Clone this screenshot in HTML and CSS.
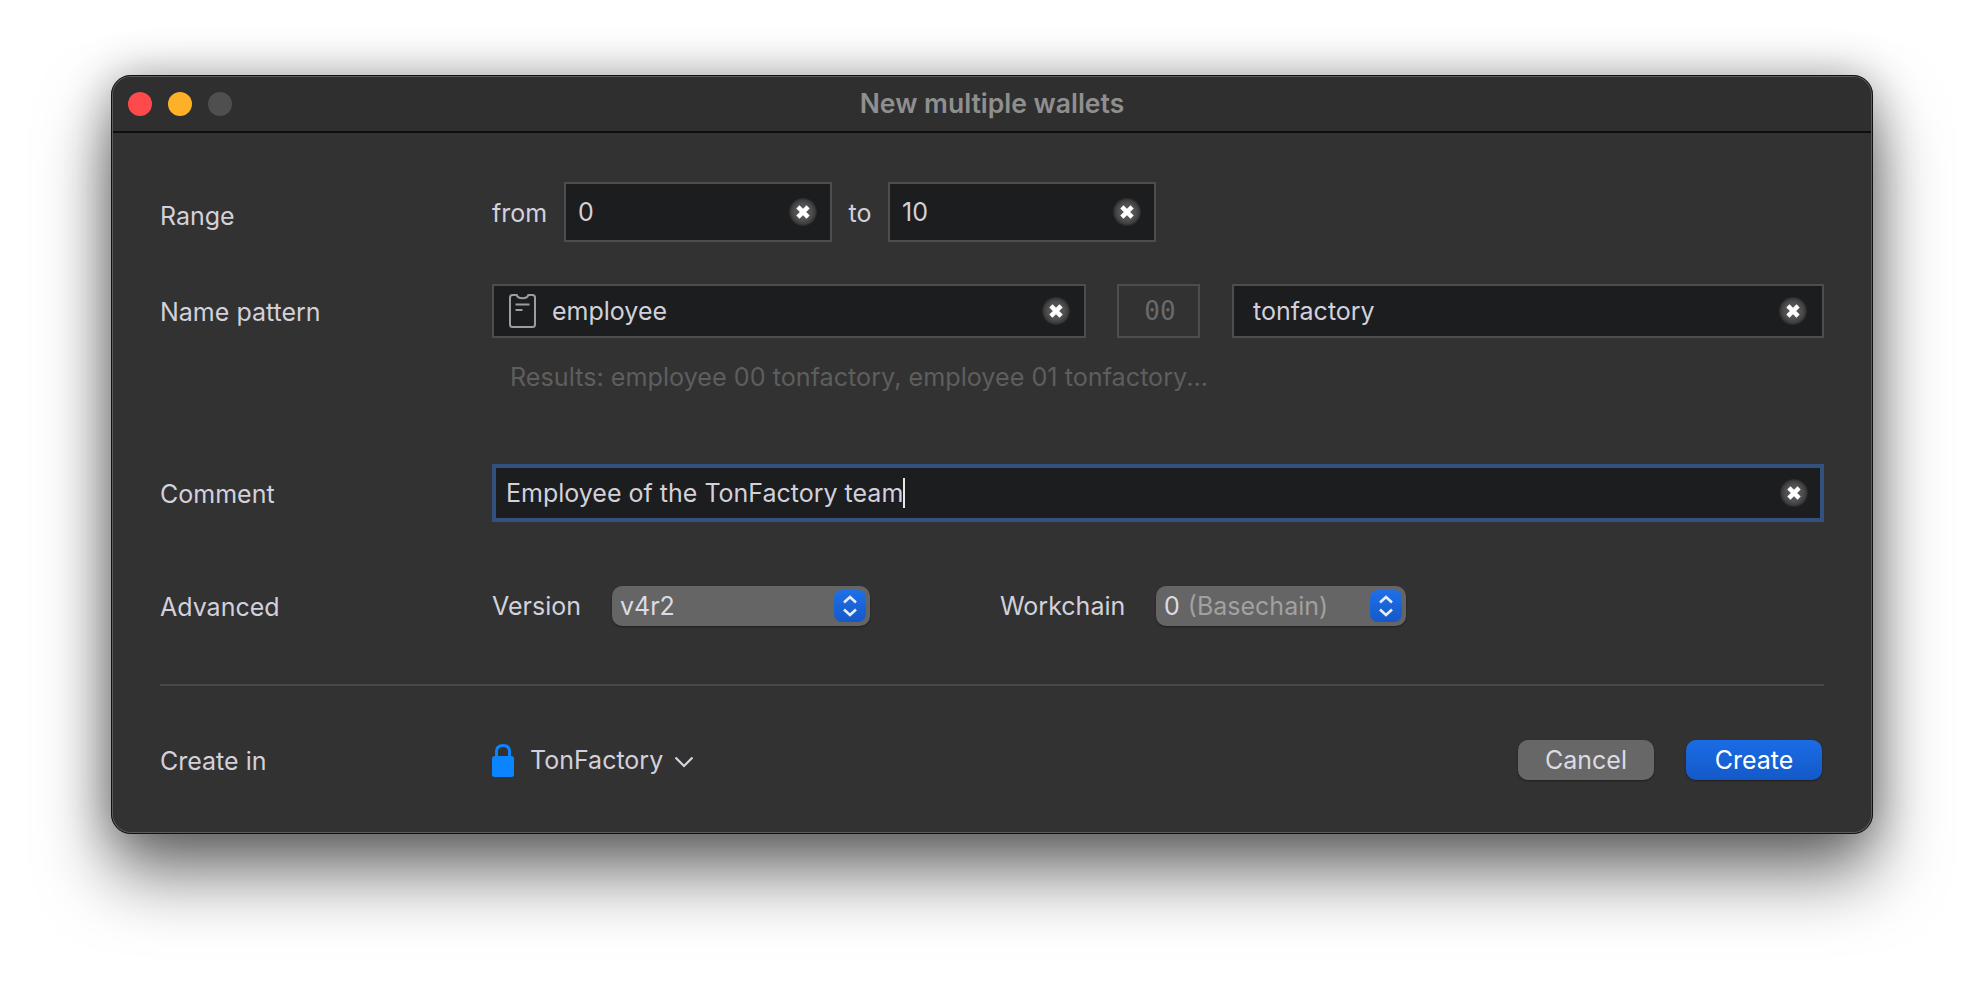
FILE: index.html
```html
<!DOCTYPE html>
<html lang="en">
<head>
  <meta charset="UTF-8">
  <title>New multiple wallets</title>
  <link rel="stylesheet" href="styles.css">
</head>
<body>
<div class="window">
  <div class="titlebar">
    <div class="lights">
      <span class="light red"></span>
      <span class="light yellow"></span>
      <span class="light gray"></span>
    </div>
    <div class="title">New multiple wallets</div>
  </div>

  <div class="form">
    <!-- range -->
    <div class="row row-range">
      <div class="label label-low">Range</div>
      <div class="fields">
        <span class="word word-from">from</span>
        <div class="input input-range">
          <span class="value">0</span>
          <span class="clear"><svg viewBox="0 0 12 12"><path d="M2.6 2.6l6.8 6.8M9.4 2.6l-6.8 6.8"/></svg></span>
        </div>
        <span class="word word-to">to</span>
        <div class="input input-range">
          <span class="value">10</span>
          <span class="clear"><svg viewBox="0 0 12 12"><path d="M2.6 2.6l6.8 6.8M9.4 2.6l-6.8 6.8"/></svg></span>
        </div>
      </div>
    </div>

    <!-- name pattern -->
    <div class="row row-name">
      <div class="label">Name pattern</div>
      <div class="fields fields-name">
        <div class="input input-prefix">
          <svg class="badge" viewBox="0 0 27 34">
            <path class="badge-line" d="M3.5 1h4.2c.5 2.2 2.6 3.2 5.8 3.2s5.300-1 5.800-3.200h4.200c1.400 0 2.500 1.100 2.500 2.500v27c0 1.400-1.100 2.500-2.500 2.500h-20c-1.400 0-2.500-1.100-2.500-2.500v-27c0-1.400 1.100-2.500 2.500-2.500z"/>
            <path class="badge-text" d="M6.500 10.500h14M6.500 16h7"/>
          </svg>
          <span class="value">employee</span>
          <span class="clear"><svg viewBox="0 0 12 12"><path d="M2.6 2.6l6.8 6.8M9.4 2.6l-6.8 6.8"/></svg></span>
        </div>
        <div class="counter">00</div>
        <div class="input input-suffix">
          <span class="value">tonfactory</span>
          <span class="clear"><svg viewBox="0 0 12 12"><path d="M2.6 2.6l6.8 6.8M9.4 2.6l-6.8 6.8"/></svg></span>
        </div>
      </div>
    </div>
    <div class="results">Results: employee 00 tonfactory, employee 01 tonfactory...</div>

    <!-- comment -->
    <div class="row row-comment">
      <div class="label">Comment</div>
      <div class="input input-focus">
        <span class="value">Employee of the TonFactory team</span>
        <span class="caret"></span>
        <span class="clear"><svg viewBox="0 0 12 12"><path d="M2.6 2.6l6.8 6.8M9.4 2.6l-6.8 6.8"/></svg></span>
      </div>
    </div>

    <!-- advanced -->
    <div class="row row-advanced">
      <div class="label">Advanced</div>
      <div class="fields">
        <span class="word word-version">Version</span>
        <div class="select select-version">
          <span class="select-text">v4r2</span>
          <span class="stepper"><svg viewBox="0 0 32 32"><path d="M10 12.500l6-5.500 6 5.500M10 19.500l6 5.500 6-5.500"/></svg></span>
        </div>
        <span class="word word-workchain">Workchain</span>
        <div class="select select-workchain">
          <span class="select-text">0</span>
          <span class="select-hint">(Basechain)</span>
          <span class="stepper"><svg viewBox="0 0 32 32"><path d="M10 12.500l6-5.500 6 5.500M10 19.500l6 5.500 6-5.500"/></svg></span>
        </div>
      </div>
    </div>

    <div class="divider"></div>

    <!-- footer -->
    <div class="row row-footer">
      <div class="label">Create in</div>
      <div class="fields fields-footer">
        <svg class="lock" viewBox="0 0 22 33">
          <path class="lock-shackle" d="M4.500 14v-6.500c0-4 2.600-6 6.500-6s6.500 2 6.500 6v6.500"/>
          <rect class="lock-body" x="0" y="12" width="22" height="21" rx="2.500"/>
        </svg>
        <span class="vault">TonFactory</span>
        <svg class="chevron" viewBox="0 0 20 12"><path d="M1.500 1.500l8.500 8.500 8.500-8.500"/></svg>
        <div class="buttons">
          <div class="btn btn-cancel">Cancel</div>
          <div class="btn btn-create">Create</div>
        </div>
      </div>
    </div>
  </div>
</div>
</body>
</html>
```

FILE: styles.css
```css
* {
  padding: 0;
  margin: 0;
  box-sizing: border-box;
}

body {
  width: 1984px;
  height: 982px;
  padding: 75px 111px 0;
  background: #fff;
  overflow: hidden;
  font-family: "Inter", "Liberation Sans", sans-serif;
  font-size: 25px;
  color: #d2d1db;
}

.window {
  width: 1762px;
  height: 759px;
  background: #323232;
  border: 2px solid #5c5c5c;
  outline: 1px solid #111;
  outline-offset: -1px;
  border-radius: 20px;
  box-shadow: 0 40px 70px rgba(0, 0, 0, 0.55), 0 0 45px rgba(0, 0, 0, 0.3);
}

.titlebar {
  height: 56px;
  position: relative;
  display: flex;
  align-items: center;
  justify-content: center;
  padding-bottom: 2px;
  background: #2f2f2f;
  border-bottom: 2px solid #0e0e0e;
  border-radius: 18px 18px 0 0;
}

.lights {
  position: absolute;
  left: 15px;
  top: 15px;
  display: flex;
  gap: 16px;
}

.light {
  width: 24px;
  height: 24px;
  border-radius: 50%;
}

.red { background: #fe4a4b; }
.yellow { background: #feb127; }
.gray { background: #4f4f4f; }

.title {
  font-size: 26.5px;
  font-weight: 600;
  color: #8f8f8f;
}

.form {
  padding: 49px 47px 0;
}

.row {
  display: flex;
  align-items: center;
}

.label {
  width: 332px;
  flex: none;
  padding-top: 2px;
}

.label-low {
  padding-top: 7px;
}

.fields {
  display: flex;
  align-items: center;
}

.row-range { height: 60px; }
.row-name { height: 54px; margin-top: 42px; }
.row-comment { height: 58px; margin-top: 72px; }
.row-advanced { height: 40px; margin-top: 64px; }
.row-footer { height: 40px; margin-top: 54px; }

.word-from { width: 72px; padding-top: 1px; }
.word-to { width: 56px; padding-top: 1px; text-align: center; }
.word-version { width: 120px; }
.word-workchain { width: 156px; margin-left: 130px; }

.input {
  display: flex;
  align-items: center;
  background: #1c1d1f;
  border: 2px solid #4d4d4d;
}

.value {
  white-space: nowrap;
}

.input-range {
  width: 268px;
  height: 60px;
  padding: 0 13px 1px 12px;
}

.input-prefix {
  width: 594px;
  height: 54px;
  padding: 0 14px 0 15px;
}

.input-suffix {
  width: 592px;
  height: 54px;
  padding: 0 15px 0 19px;
}

.input-focus {
  flex: 1;
  height: 58px;
  border: 4px solid #33507e;
  padding: 0 12px 0 10px;
}

.clear {
  margin-left: auto;
  width: 28px;
  height: 28px;
  border-radius: 50%;
  flex: none;
  display: flex;
  align-items: center;
  justify-content: center;
  background: radial-gradient(circle closest-side, #5c5c5c 0, #505050 60%, #3e3e3e 85%, #26272a 100%);
}

.input-range .clear {
  margin-top: 1px;
}

.clear svg {
  width: 18px;
  height: 18px;
}

.clear path {
  fill: none;
  stroke: #fff;
  stroke-width: 3;
}

.badge {
  width: 27px;
  height: 34px;
  flex: none;
  margin-right: 16px;
}

.badge-line,
.badge-text {
  fill: none;
  stroke: #9d9d9f;
  stroke-width: 2;
}

.counter {
  width: 83px;
  height: 54px;
  margin: 0 32px 0 31px;
  padding-left: 3px;
  display: flex;
  align-items: center;
  justify-content: center;
  border: 2px solid #4d4d4d;
  font-family: "DejaVu Sans Mono", "Liberation Mono", monospace;
  font-size: 26px;
  color: #6a6a6a;
}

.results {
  margin: 24px 0 0 350px;
  height: 30px;
  line-height: 30px;
  font-size: 25.2px;
  color: #5e5e5e;
  white-space: nowrap;
}

.caret {
  width: 2px;
  height: 30px;
  background: #e6e6e6;
}

.select {
  height: 40px;
  display: flex;
  align-items: center;
  padding: 0 4px 0 8px;
  border-radius: 10px;
  background: #656565;
  box-shadow: 0 1px 2px rgba(0, 0, 0, 0.4);
}

.select-version { width: 258px; }
.select-workchain { width: 250px; }

.select-text {
  color: #dcdbe4;
}

.select-hint {
  margin-left: 8px;
  color: #a1a1a1;
}

.stepper {
  margin-left: auto;
  width: 32px;
  height: 32px;
  border-radius: 8px;
  background: linear-gradient(#1f6fe6, #1459c9);
}

.stepper svg {
  display: block;
  width: 32px;
  height: 32px;
}

.stepper path {
  fill: none;
  stroke: #e8edf8;
  stroke-width: 2.6;
}

.divider {
  height: 2px;
  margin-top: 58px;
  background: #484848;
}

.fields-footer {
  flex: 1;
}

.lock {
  width: 22px;
  height: 33px;
  flex: none;
}

.lock-shackle {
  fill: none;
  stroke: #0a84ff;
  stroke-width: 3;
}

.lock-body {
  fill: #0a84ff;
}

.vault {
  margin-left: 16px;
}

.chevron {
  width: 20px;
  height: 12px;
  margin: 4px 0 0 11px;
  fill: none;
  stroke: #d5d4de;
  stroke-width: 2.2;
}

.buttons {
  margin-left: auto;
  display: flex;
  gap: 32px;
  padding-right: 2px;
}

.btn {
  width: 136px;
  height: 40px;
  border-radius: 10px;
  display: flex;
  align-items: center;
  justify-content: center;
  box-shadow: 0 1px 2px rgba(0, 0, 0, 0.4);
}

.btn-cancel {
  background: #676767;
  color: #dcdbe4;
}

.btn-create {
  background: linear-gradient(#1b6ce6, #1459c8);
  color: #fff;
}
```
